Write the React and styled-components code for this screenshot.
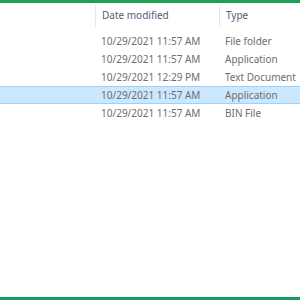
import React from "react";
import styled, { createGlobalStyle } from "styled-components";

const Global = createGlobalStyle`
  html, body {
    margin: 0;
    padding: 0;
    background: #fff;
  }
`;

const Frame = styled.div`
  width: 300px;
  height: 300px;
  box-sizing: border-box;
  border-top: 3px solid #1fa155;
  border-bottom: 3px solid #1a9a5a;
  background: #fff;
  font-family: "Noto Sans", sans-serif;
  font-size: 10px;
  overflow: hidden;
`;

const Header = styled.div`
  display: grid;
  grid-template-columns: 95px 124px 1fr;
  height: 29px;
  padding-top: 2px;
  box-sizing: border-box;
  align-items: start;
`;

const HeaderCell = styled.div`
  height: 22px;
  display: flex;
  align-items: center;
  padding-left: 6px;
  padding-bottom: 2px;
  box-sizing: border-box;
  color: #4c607a;
  border-left: ${(p) => (p.$first ? "none" : "1px solid #e8e8e8")};
  white-space: nowrap;
`;

const Rows = styled.div`
  display: flex;
  flex-direction: column;
`;

const Row = styled.div`
  display: grid;
  grid-template-columns: 95px 124px 1fr;
  height: 18px;
  box-sizing: border-box;
  align-items: center;
  background: ${(p) => (p.$selected ? "#cce8ff" : "transparent")};
  border-top: 1px solid ${(p) => (p.$selected ? "#99d1ff" : "transparent")};
  border-bottom: 1px solid ${(p) => (p.$selected ? "#99d1ff" : "transparent")};
`;

const Cell = styled.div`
  padding-left: 6px;
  color: #6d6d6d;
  white-space: nowrap;
  overflow: hidden;
`;

const files = [
  { date: "10/29/2021 11:57 AM", type: "File folder" },
  { date: "10/29/2021 11:57 AM", type: "Application" },
  { date: "10/29/2021 12:29 PM", type: "Text Document" },
  { date: "10/29/2021 11:57 AM", type: "Application", selected: true },
  { date: "10/29/2021 11:57 AM", type: "BIN File" },
];

export default function App() {
  return (
    <>
      <Global />
      <Frame>
        <Header>
          <HeaderCell $first />
          <HeaderCell>Date modified</HeaderCell>
          <HeaderCell>Type</HeaderCell>
        </Header>
        <Rows>
          {files.map((f, i) => (
            <Row key={i} $selected={f.selected}>
              <Cell />
              <Cell>{f.date}</Cell>
              <Cell>{f.type}</Cell>
            </Row>
          ))}
        </Rows>
      </Frame>
    </>
  );
}
